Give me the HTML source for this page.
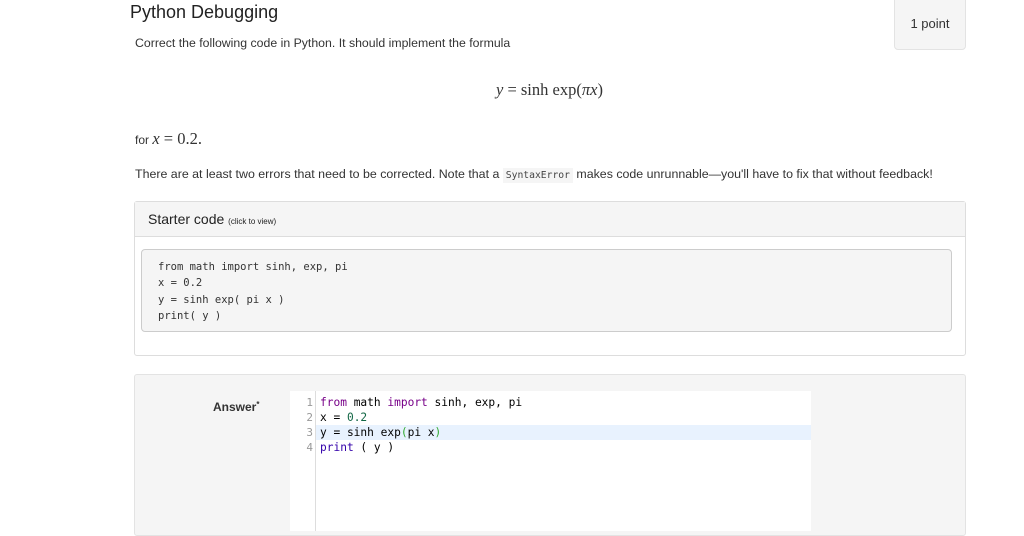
<!DOCTYPE html>
<html><head><style>
body{margin:0;width:1024px;height:523px;overflow:hidden;background:#fff;font-family:"Liberation Sans",sans-serif;color:#333;position:relative}
.a{position:absolute}
.mono{font-family:"DejaVu Sans Mono","Liberation Mono",monospace}
.m{font-family:"Liberation Serif",serif;font-size:16.5px}
</style></head><body>
<div class="a" style="left:130px;top:2px;font-size:18px;color:#222">Python Debugging</div>
<div class="a" style="left:894px;top:-4px;width:70px;height:52px;background:#f5f5f5;border:1px solid #e3e3e3;border-radius:4px;font-size:13px;text-align:center;line-height:54px">1 point</div>
<div class="a" style="left:135px;top:36px;font-size:12.3px">Correct the following code in Python. It should implement the formula</div>
<div class="a m" style="left:496px;top:80px"><i>y</i> = sinh exp(<i>πx</i>)</div>
<div class="a" style="left:135px;top:129px;font-size:12px">for <span class="m"><i>x</i> = 0.2.</span></div>
<div class="a" style="left:135px;top:167px;font-size:12.4px">There are at least two errors that need to be corrected. Note that a <span class="mono" style="font-size:9.7px;background:#f5f5f5;color:#444;padding:2px 3px">SyntaxError</span> makes code unrunnable—you'll have to fix that without feedback!</div>
<div class="a" style="left:134px;top:201px;width:830px;height:153px;border:1px solid #ddd;border-radius:3px">
 <div style="height:34px;background:#f5f5f5;border-bottom:1px solid #ddd;padding:0 13px;line-height:34px;font-size:14px;color:#222">Starter code <span style="font-size:8px">(click to view)</span></div>
 <div class="a mono" style="left:6px;top:47px;width:811px;height:83px;background:#f5f5f5;border:1px solid #ccc;border-radius:4px;padding:9px 0 0 16px;box-sizing:border-box;font-size:10.5px;line-height:16.3px;color:#333;white-space:pre">from math import sinh, exp, pi
x = 0.2
y = sinh exp( pi x )
print( y )</div>
</div>
<div class="a" style="left:134px;top:374px;width:830px;height:160px;background:#f5f5f5;border:1px solid #e3e3e3;border-radius:3px"></div>
<div class="a" style="left:213px;top:400px;font-size:12px;font-weight:bold;color:#333">Answer<span style="font-size:8px;vertical-align:top">*</span></div>
<div class="a" style="left:290px;top:391px;width:521px;height:140px;background:#fff"></div>
<div class="a" style="left:315px;top:391px;width:1px;height:140px;background:#ddd"></div>
<div class="a" style="left:316px;top:425px;width:495px;height:15px;background:#e8f2fe"></div>
<div class="a mono" style="left:300px;top:395px;font-size:11px;line-height:15px;color:#999;white-space:pre;text-align:right;width:13px">1
2
3
4</div>
<div class="a mono" style="left:320px;top:395px;font-size:11.2px;line-height:15px;color:#000;white-space:pre"><span style="color:#708">from</span> math <span style="color:#708">import</span> sinh, exp, pi
x = <span style="color:#164">0.2</span>
y = sinh exp<span style="color:#3a3">(</span>pi x<span style="color:#3a3">)</span>
<span style="color:#30a">print</span> ( y )</div>
</body></html>
